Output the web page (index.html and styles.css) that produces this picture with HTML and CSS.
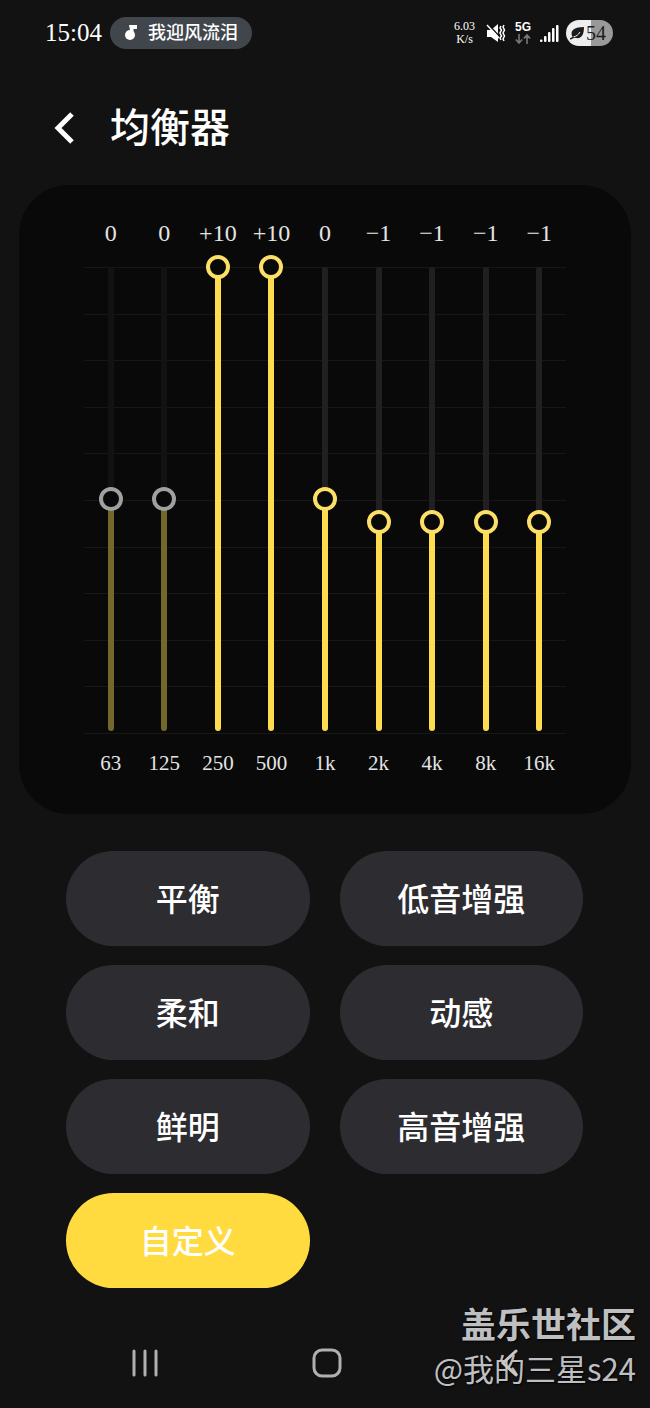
FILE: index.html
```html
<!DOCTYPE html>
<html lang="zh-CN">
<head>
    <meta charset="UTF-8">
    <meta name="viewport" content="width=device-width, initial-scale=1.0">
    <title>均衡器</title>
    <link rel="stylesheet" href="styles.css">
</head>
<body>
    <div class="status-bar">
        <span class="time">15:04</span>
        <div class="now-playing">
            <svg width="14" height="18" viewBox="0 0 14 18" fill="#fff">
                <circle cx="6" cy="11" r="5"/>
                <path d="M5 1h8v4H9.500v6H7z"/>
            </svg>
            <span>我迎风流泪</span>
        </div>
        <div class="indicators">
            <div class="net-speed"><span>6.03</span><span>K/s</span></div>
            <svg class="mute" width="20" height="20" viewBox="0 0 20 20">
                <path d="M1 7h4l7-6v18l-7-5H1z" fill="#fff"/>
                <path d="M2 1l12 13" stroke="#121212" stroke-width="1.500"/>
                <path d="M1 2l12 13" stroke="#fff" stroke-width="1.500"/>
                <path d="M15 3l-1 2 1.500 2-1.500 3 1.500 3-1.500 2 1 2M18 2l-1 2 1.500 3-1.500 3 1.500 3-1.500 3 1 2" fill="none" stroke="#fff" stroke-width="1.500"/>
            </svg>
            <div class="network">
                <span>5G</span>
                <svg width="16" height="10" viewBox="0 0 16 10" fill="none" stroke="#777" stroke-width="1.600">
                    <path d="M4 0v9M0.800 5.500L4 9l3.200-3.500M12 10V1M8.800 4.500L12 1l3.200 3.500"/>
                </svg>
            </div>
            <svg class="signal" width="19" height="18" viewBox="0 0 19 18" fill="#fff">
                <rect x="0" y="15.500" width="2.500" height="2.500" rx="1"/>
                <rect x="4" y="12" width="2.500" height="6" rx="1"/>
                <rect x="8" y="8" width="2.500" height="10" rx="1"/>
                <rect x="12" y="4" width="2.500" height="14" rx="1"/>
                <rect x="16" y="1" width="2.500" height="17" rx="1"/>
            </svg>
            <div class="battery">
                <svg width="15" height="14" viewBox="0 0 15 14">
                    <path d="M2 10C0 4 5 1 14 1c0 7-2 12-8 11-2 0-3-1-4-2z" fill="#1c1c1c"/>
                    <path d="M3 11c4-1 5-2 7-5" fill="none" stroke="#eee"/>
                    <path d="M0 13l4-2" stroke="#1c1c1c" stroke-width="1.500"/>
                </svg>
                <span>54</span>
            </div>
        </div>
    </div>

    <header class="header">
        <button class="back" aria-label="返回">
            <svg width="22" height="34" viewBox="0 0 22 34" fill="none" stroke="#fff" stroke-width="5">
                <path d="M18 2L4 16l14 14"/>
            </svg>
        </button>
        <h1>均衡器</h1>
    </header>

    <main>
        <section class="equalizer">
            <div class="grid-lines">
                <i></i><i></i><i></i><i></i><i></i><i></i><i></i><i></i><i></i><i></i><i></i>
            </div>
            <div class="bands">
                <div class="band muted">
                    <output for="b63">0</output>
                    <div class="slider" style="--level: 50%"><input type="range" id="b63" min="-10" max="10" value="0"></div>
                    <label for="b63">63</label>
                </div>
                <div class="band muted">
                    <output for="b125">0</output>
                    <div class="slider" style="--level: 50%"><input type="range" id="b125" min="-10" max="10" value="0"></div>
                    <label for="b125">125</label>
                </div>
                <div class="band">
                    <output for="b250">+10</output>
                    <div class="slider" style="--level: 100%"><input type="range" id="b250" min="-10" max="10" value="10"></div>
                    <label for="b250">250</label>
                </div>
                <div class="band">
                    <output for="b500">+10</output>
                    <div class="slider" style="--level: 100%"><input type="range" id="b500" min="-10" max="10" value="10"></div>
                    <label for="b500">500</label>
                </div>
                <div class="band">
                    <output for="b1k">0</output>
                    <div class="slider" style="--level: 50%"><input type="range" id="b1k" min="-10" max="10" value="0"></div>
                    <label for="b1k">1k</label>
                </div>
                <div class="band">
                    <output for="b2k">−1</output>
                    <div class="slider" style="--level: 45%"><input type="range" id="b2k" min="-10" max="10" value="-1"></div>
                    <label for="b2k">2k</label>
                </div>
                <div class="band">
                    <output for="b4k">−1</output>
                    <div class="slider" style="--level: 45%"><input type="range" id="b4k" min="-10" max="10" value="-1"></div>
                    <label for="b4k">4k</label>
                </div>
                <div class="band">
                    <output for="b8k">−1</output>
                    <div class="slider" style="--level: 45%"><input type="range" id="b8k" min="-10" max="10" value="-1"></div>
                    <label for="b8k">8k</label>
                </div>
                <div class="band">
                    <output for="b16k">−1</output>
                    <div class="slider" style="--level: 45%"><input type="range" id="b16k" min="-10" max="10" value="-1"></div>
                    <label for="b16k">16k</label>
                </div>
            </div>
        </section>

        <section class="presets">
            <button>平衡</button>
            <button>低音增强</button>
            <button>柔和</button>
            <button>动感</button>
            <button>鲜明</button>
            <button>高音增强</button>
            <button class="active">自定义</button>
        </section>
    </main>

    <nav class="nav-bar">
        <button aria-label="最近">
            <svg width="28" height="30" viewBox="0 0 28 30" stroke="#b0b0b0" stroke-width="3" stroke-linecap="round">
                <path d="M3 3v24M14 3v24M25 3v24"/>
            </svg>
        </button>
        <button aria-label="主屏幕">
            <svg width="30" height="30" viewBox="0 0 30 30" fill="none" stroke="#b0b0b0" stroke-width="3">
                <rect x="2" y="2" width="26" height="26" rx="8"/>
            </svg>
        </button>
        <button aria-label="返回">
            <svg width="18" height="30" viewBox="0 0 18 30" fill="none" stroke="#c8c8c8" stroke-width="3" stroke-linecap="round">
                <path d="M16 3L3 15l13 12"/>
            </svg>
        </button>
    </nav>

    <div class="watermark">
        <strong>盖乐世社区</strong>
        <span>@我的三星s24</span>
    </div>

    <script>
        document.querySelectorAll('.slider input').forEach((input) => {
            input.addEventListener('input', () => {
                const value = Number(input.value);
                const band = input.closest('.band');
                input.parentElement.style.setProperty('--level', (value + 10) * 5 + '%');
                band.querySelector('output').textContent = value > 0 ? '+' + value : String(value).replace('-', '−');
            });
        });
    </script>
</body>
</html>
```
FILE: styles.css
```css
* {
    box-sizing: border-box;
}

body {
    position: relative;
    display: flex;
    flex-direction: column;
    min-height: 100vh;
    margin: 0;
    background-color: #121212;
    color: #fff;
    font-family: "Liberation Serif", "Noto Sans CJK SC", serif;
}

button {
    padding: 0;
    border: none;
    background: none;
    color: inherit;
    font-family: inherit;
    cursor: pointer;
}

svg {
    display: block;
}

/* Status bar */
.status-bar {
    display: flex;
    align-items: center;
    height: 32px;
    margin-top: 17px;
    padding: 0 37px 0 45px;
}

.time {
    font-size: 25px;
}

.now-playing {
    display: flex;
    align-items: center;
    gap: 10px;
    height: 32px;
    margin-left: 8px;
    padding: 0 14px;
    border-radius: 16px;
    background-color: #40464c;
    font-size: 18px;
    font-weight: 500;
    line-height: 24px;
}

.indicators {
    display: flex;
    align-items: center;
    gap: 9px;
    margin-left: auto;
}

.net-speed {
    display: flex;
    flex-direction: column;
    align-items: center;
    margin-right: 2px;
    font-size: 12px;
    line-height: 13px;
}

.network {
    display: flex;
    flex-direction: column;
    align-items: center;
    gap: 1px;
    font: bold 12px/11px "Liberation Sans", sans-serif;
}

.battery {
    display: flex;
    align-items: center;
    gap: 1px;
    height: 26px;
    margin-left: -2px;
    padding: 0 7px 0 4px;
    border-radius: 13px;
    background: linear-gradient(to right, #eee 54%, #999 54%);
    color: #1c1c1c;
    font-size: 20px;
}

/* Title */
.header {
    display: flex;
    align-items: center;
    gap: 34px;
    padding: 55px 54px 32px;
}

.header h1 {
    margin: 0;
    font-size: 40px;
    font-weight: 500;
    line-height: 49px;
}

/* Equalizer */
.equalizer {
    display: grid;
    margin: 0 19px;
    padding: 36px 65px 39px;
    border-radius: 50px;
    background-color: #090909;
}

.grid-lines,
.bands {
    grid-area: 1 / 1;
}

.grid-lines {
    display: flex;
    flex-direction: column;
    justify-content: space-between;
    height: 467px;
    margin-top: 46px;
}

.grid-lines i {
    height: 1px;
    background-color: #171717;
}

.bands {
    display: grid;
    grid-template-columns: repeat(9, 1fr);
}

.band {
    display: flex;
    flex-direction: column;
    align-items: center;
    color: #e4e4e4;
    line-height: 24px;
}

.band output {
    font-size: 24px;
}

.band label {
    margin-top: 8px;
    font-size: 21px;
}

.slider {
    --fill: #fddc4f;
    --track: #202020;
    --ring: #fbdf68;
    display: grid;
    justify-items: center;
    height: 488px;
    margin-top: 10px;
}

.muted .slider {
    --fill: #74672c;
    --track: #121212;
    --ring: #a0a0a0;
}

.slider::before {
    content: "";
    grid-area: 1 / 1;
    width: 6px;
    margin: 12px 0;
    border-radius: 3px;
    background: linear-gradient(to top, var(--fill) var(--level), var(--track) var(--level));
}

.slider input {
    grid-area: 1 / 1;
    z-index: 1;
    width: 24px;
    height: 488px;
    margin: 0;
    appearance: none;
    background: none;
    writing-mode: vertical-lr;
    direction: rtl;
    cursor: pointer;
}

.slider input::-webkit-slider-thumb {
    appearance: none;
    width: 24px;
    height: 24px;
    border: 4px solid var(--ring);
    border-radius: 50%;
    background-color: #090909;
}

/* Presets */
.presets {
    display: grid;
    grid-template-columns: 1fr 1fr;
    gap: 19px 30px;
    margin: 37px 0 30px;
    padding: 0 67px 0 66px;
}

.presets button {
    height: 95px;
    padding-bottom: 4px;
    border-radius: 48px;
    background-color: #2d2c30;
    font-size: 32px;
    font-weight: 500;
}

.presets .active {
    background-color: #ffdb3f;
}

/* Navigation */
.nav-bar {
    z-index: 1;
    display: grid;
    grid-template-columns: repeat(3, 1fr);
    justify-items: center;
    align-items: center;
    height: 90px;
    margin-top: auto;
    padding: 0 50px 0 54px;
}

.nav-bar button {
    position: relative;
    z-index: 1;
}

.watermark {
    position: absolute;
    right: 14px;
    bottom: 19px;
    display: flex;
    flex-direction: column;
    align-items: flex-end;
    color: #bfbfc1;
    font-family: "Noto Sans CJK SC", sans-serif;
    text-shadow: 1px 1px 2px #000;
    pointer-events: none;
}

.watermark strong {
    font-size: 35px;
    line-height: 48px;
}

.watermark span {
    font-size: 31px;
    line-height: 42px;
}
```
